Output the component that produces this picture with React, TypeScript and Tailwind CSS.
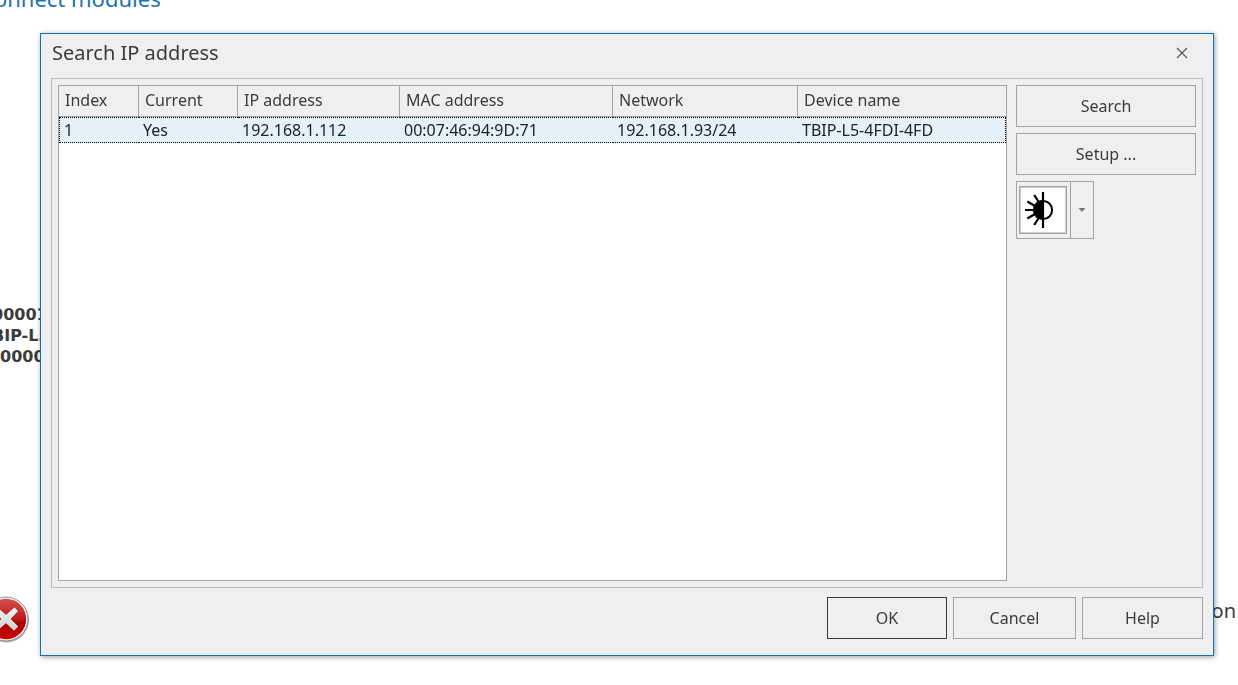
import { useState } from "react";
import type { ReactNode } from "react";

const columns = [
  { label: "Index", width: "w-[80px]" },
  { label: "Current", width: "w-[99px]" },
  { label: "IP address", width: "w-[162px]" },
  { label: "MAC address", width: "w-[213px]" },
  { label: "Network", width: "w-[185px]" },
  { label: "Device name", width: "" },
];

const devices = [["1", "Yes", "192.168.1.112", "00:07:46:94:9D:71", "192.168.1.93/24", "TBIP-L5-4FDI-4FD"]];

function DialogButton({ children, className = "border-[#a3a3a3]" }: { children: ReactNode; className?: string }) {
  return (
    <button type="button" className={`h-[42px] border bg-[#efefef] hover:bg-[#e4f1fa] ${className}`}>
      {children}
    </button>
  );
}

function WinkIcon() {
  return (
    <svg viewBox="0 0 44 44" className="h-11 w-11" fill="none" stroke="#000">
      <path d="M22 4V40" strokeWidth="2.2" />
      <path d="M22 12.9A9.1 9.1 0 0 1 22 31.1" strokeWidth="2" />
      <path d="M22 11.8A10.2 10.2 0 0 0 22 32.2Z" fill="#000" stroke="none" />
      <path d="M4 22H13M6.300 13.500L14.500 18.200M6.300 30.500L14.500 25.800M13.200 7L18 14.500M13.200 37L18 29.500" strokeWidth="2.2" />
    </svg>
  );
}

function ErrorIcon() {
  return (
    <svg viewBox="0 0 48 48" className="h-12 w-12 shrink-0">
      <defs>
        <linearGradient id="red" x1="0" y1="0" x2="0" y2="1">
          <stop offset="0" stopColor="#d4524c" />
          <stop offset="0.5" stopColor="#bd1a1a" />
          <stop offset="0.6" stopColor="#ac0000" />
          <stop offset="1" stopColor="#cc0505" />
        </linearGradient>
        <linearGradient id="cross" x1="0" y1="0" x2="0" y2="1">
          <stop offset="0" stopColor="#f6f6f6" />
          <stop offset="1" stopColor="#cfcfcf" />
        </linearGradient>
      </defs>
      <circle cx="24.500" cy="25" r="22.500" fill="#b5b5b5" />
      <circle cx="24" cy="24" r="22" fill="#f4f4f4" stroke="#777" strokeWidth="0.8" />
      <circle cx="24" cy="24" r="20.200" fill="url(#red)" />
      <path
        d="M15 11.500L24 19.500L32.500 12L36.500 16L29 24L36.500 31.500L32 36L24 28.500L15.500 36L11.500 32L19 24L11 16Z"
        fill="url(#cross)"
        stroke="#8e1010"
        strokeWidth="0.6"
      />
    </svg>
  );
}

// Page behind the dialog, scrolled a little to the right and down
function PageBehind() {
  return (
    <main className="flex h-screen flex-col overflow-hidden bg-white text-[#3b3b3b]">
      <h1 className="-mt-5 -ml-5 text-[22px] leading-9 text-[#1b72ad]">Connect modules</h1>
      <div className="mt-72 -ml-2 font-[Verdana,'DejaVu_Sans',sans-serif] text-base leading-[21px] font-bold">
        <p>00001</p>
        <p>BIP-L5</p>
        <p className="pl-2">0000</p>
      </div>
      <div className="mt-[228px] -ml-[18px] flex items-start justify-between pr-0.5">
        <ErrorIcon />
        <span className="text-xl leading-8">on</span>
      </div>
    </main>
  );
}

export default function App() {
  const [open, setOpen] = useState(true);
  const [selected, setSelected] = useState(0);

  return (
    <div className="font-[Tahoma,'Noto_Sans',sans-serif] text-base text-[#3b3b3b]">
      <PageBehind />
      {open && (
        <div
          role="dialog"
          aria-labelledby="dialog-title"
          className="fixed inset-x-0 top-[33px] bottom-[29px] mr-6 ml-10 flex flex-col border border-[#0f72b8] bg-[#efefef] px-2.5 pb-4 shadow-[1px_1px_5px_rgba(0,0,0,0.4)]"
        >
          <header className="flex h-11 items-center justify-between pr-[11px] pb-1.5 pl-px">
            <h2 id="dialog-title" className="text-xl">Search IP address</h2>
            <button type="button" aria-label="Close" onClick={() => setOpen(false)} className="flex h-5 w-5 items-center justify-center">
              <svg viewBox="0 0 12 12" className="h-3 w-3" stroke="#555" strokeWidth="1.2">
                <path d="M1 1L11 11M11 1L1 11" />
              </svg>
            </button>
          </header>

          <div className="flex min-h-0 flex-1 gap-[9px] border border-[#bcbcbc] p-1.5">
            <div className="min-w-0 flex-1 border border-[#a3a3a3] bg-white">
              <table className="w-full table-fixed border-separate border-spacing-0 text-left leading-6 whitespace-nowrap">
                <thead>
                  <tr className="bg-[#efefef]">
                    {columns.map((c) => (
                      <th key={c.label} className={`h-[31px] border-r border-b border-[#a3a3a3] p-0 pb-0.5 pl-1.5 font-normal last:border-r-0 ${c.width}`}>
                        {c.label}
                      </th>
                    ))}
                  </tr>
                </thead>
                <tbody>
                  {devices.map((row, i) => (
                    <tr key={row[0]} onClick={() => setSelected(i)} className={i === selected ? "bg-[#e4f1fa] text-[#222]" : "text-[#222]"}>
                      {row.map((cell, j) => (
                        <td key={j} className="h-[26px] border-y border-dotted border-black p-0 pl-1 first:border-l last:border-r">
                          {cell}
                        </td>
                      ))}
                    </tr>
                  ))}
                </tbody>
              </table>
            </div>

            <div className="flex w-[180px] flex-col gap-1.5">
              <DialogButton>Search</DialogButton>
              <DialogButton>Setup ...</DialogButton>
              <div className="flex h-[58px] w-[78px] border border-[#a3a3a3]">
                <button type="button" aria-label="Wink" className="flex flex-1 items-center pl-0.5">
                  <span className="flex h-12 w-12 items-center justify-center border border-[#a3a3a3] bg-white ring-1 ring-[#cccccc] ring-inset">
                    <WinkIcon />
                  </span>
                </button>
                <button type="button" aria-label="Wink options" className="flex w-[23px] items-center justify-center border-l border-[#a3a3a3]">
                  <svg viewBox="0 0 8 4" className="h-1 w-2">
                    <path d="M0.500 0H7.500L4 4Z" fill="#777" />
                  </svg>
                </button>
              </div>
            </div>
          </div>

          <footer className="mt-[9px] flex justify-end gap-1.5">
            <DialogButton className="w-[120px] border-[#3b3b3b]">OK</DialogButton>
            <DialogButton className="w-[123px] border-[#a3a3a3]">Cancel</DialogButton>
            <DialogButton className="w-[121px] border-[#a3a3a3]">Help</DialogButton>
          </footer>
        </div>
      )}
    </div>
  );
}
